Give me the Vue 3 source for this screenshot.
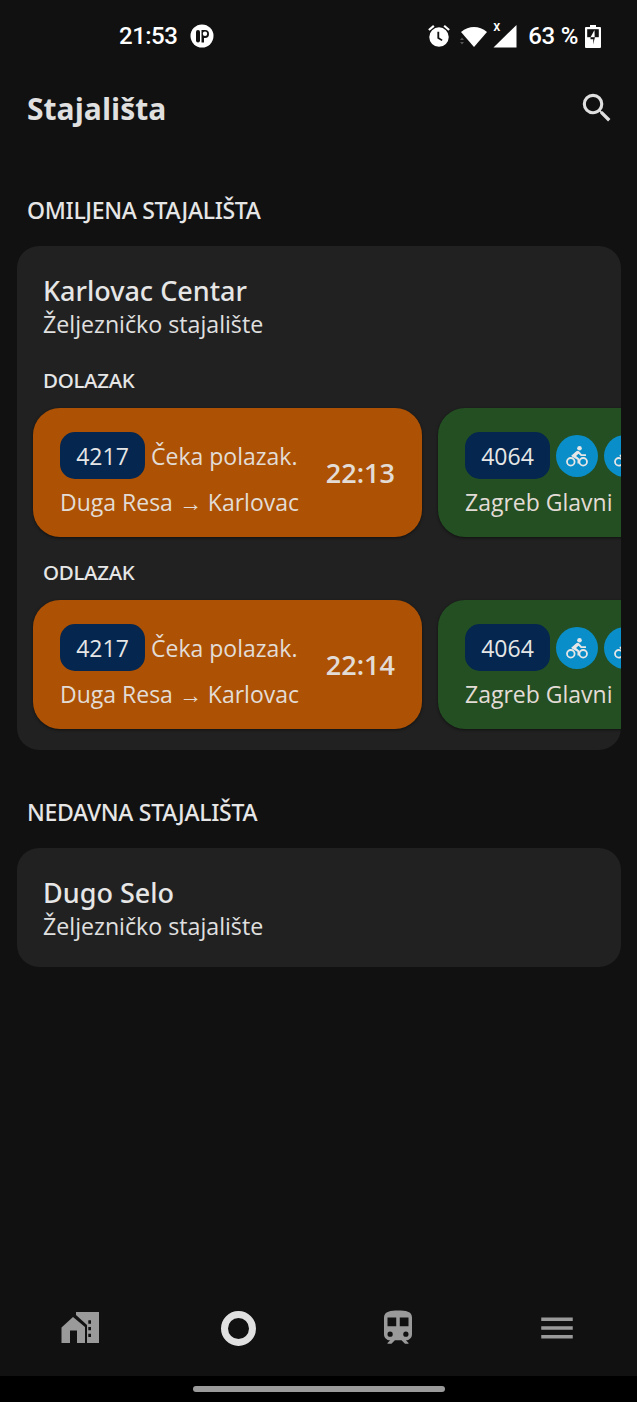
<script setup>
const rows = [
  { label: 'DOLAZAK', time: '22:13' },
  { label: 'ODLAZAK', time: '22:14' }
]
</script>

<template>
  <div class="screen">
    <div class="status">
      <div class="status-left">
        <span class="clock">21:53</span>
        <svg class="notif" width="24" height="24" viewBox="0 0 24 24">
          <circle cx="12" cy="12" r="11.500" fill="#fff" />
          <rect x="6" y="6" width="4" height="12.500" rx="2" fill="#111" />
          <path d="M11.500 6h3.500a4 4 0 0 1 0 8h-1v4.500h-2.500z" fill="#111" />
          <circle cx="15" cy="9.800" r="2.200" fill="#fff" />
        </svg>
      </div>
      <div class="status-right">
        <svg width="26" height="26" viewBox="0 0 24 24" fill="#fff">
          <path d="M22 5.700l-4.600-3.900-1.300 1.500 4.600 3.900L22 5.700zM7.900 3.400L6.600 1.900 2 5.700l1.300 1.500 4.600-3.800zM12 4a9 9 0 1 0 0 18 9 9 0 0 0 0-18z" />
          <path d="M12.200 8h-1.700v6.200l4 2.500.8-1.300-3.100-2z" fill="#111" />
        </svg>
        <svg class="wifi" width="28" height="24" viewBox="0 0 28 24">
          <path d="M1 8C5 4.500 9.500 3 14 3s9 1.500 13 5L14 23z" fill="#fff" />
          <path d="M0 16l2-2.500L4 16zM0 18h4l-2 2.500z" fill="#555" />
        </svg>
        <div class="signal">
          <span class="x">x</span>
          <svg width="24" height="24" viewBox="0 0 24 24"><path d="M23.500 1v22.500H.5z" fill="#fff" /></svg>
        </div>
        <span class="percent">63 %</span>
        <svg width="16" height="23" viewBox="0 0 16 23">
          <path d="M5 0h6v2h4a1 1 0 0 1 1 1v19a1 1 0 0 1-1 1H1a1 1 0 0 1-1-1V3a1 1 0 0 1 1-1h4z" fill="#fff" />
          <path d="M2.200 4.200h11.600v8H2.200z" fill="#111" />
          <path d="M9.500 5L5.500 12.200h4.200z" fill="#fff" />
          <path d="M5.500 12.200h4.500L8 19.500l.3-5.300H5.500z" fill="#111" />
        </svg>
      </div>
    </div>

    <header class="topbar">
      <h1>Stajališta</h1>
      <svg width="38" height="38" viewBox="0 0 24 24" fill="#e0e0e0">
        <path d="M15.500 14h-.79l-.28-.27A6.470 6.470 0 0 0 16 9.500 6.500 6.500 0 1 0 9.500 16c1.610 0 3.090-.59 4.230-1.570l.27.28v.79l5 4.990L20.490 19l-4.990-5zm-6 0C7.010 14 5 11.990 5 9.500S7.010 5 9.500 5 14 7.010 14 9.500 11.990 14 9.500 14z" />
      </svg>
    </header>

    <main class="content">
      <h2 class="section">OMILJENA STAJALIŠTA</h2>
      <section class="card">
        <div class="stop-name">Karlovac Centar</div>
        <div class="stop-type">Željezničko stajalište</div>
        <div class="rows">
          <template v-for="row in rows" :key="row.label">
            <div class="row-label">{{ row.label }}</div>
            <div class="trains">
              <div class="train orange">
                <div class="train-main">
                  <div class="train-top">
                    <span class="chip">4217</span>
                    <span>Čeka polazak.</span>
                  </div>
                  <div class="route">Duga Resa <span class="arrow">→</span> Karlovac</div>
                </div>
                <div class="time">{{ row.time }}</div>
              </div>
              <div class="train green">
                <div class="train-main">
                  <div class="train-top">
                    <span class="chip">4064</span>
                    <span v-for="n in 2" :key="n" class="bike">
                      <svg width="28" height="28" viewBox="0 0 28 28" fill="none">
                        <circle cx="16.500" cy="6.200" r="2.300" fill="#e6e6e6" />
                        <path d="M8.500 13.500l4.800-4.300c.9-.7 1.900-.7 2.700 0l2.700 3h4.300v1.900h-5.200l-2.300-2.300-2.400 2.300 3.400 2.600v4.800h-2v-3.800l-5.300-2.900c-.9-.6-1-1.600-.7-2.300z" fill="#e6e6e6" />
                        <circle cx="7.800" cy="19.800" r="3.800" stroke="#e6e6e6" stroke-width="1.800" />
                        <circle cx="20.200" cy="19.800" r="3.800" stroke="#e6e6e6" stroke-width="1.800" />
                      </svg>
                    </span>
                  </div>
                  <div class="route">Zagreb Glavni</div>
                </div>
              </div>
            </div>
          </template>
        </div>
      </section>

      <h2 class="section">NEDAVNA STAJALIŠTA</h2>
      <section class="card small">
        <div class="stop-name">Dugo Selo</div>
        <div class="stop-type">Željezničko stajalište</div>
      </section>
    </main>

    <nav class="bottom">
      <svg width="40" height="34" viewBox="0 0 40 34" fill="#9a9a9a">
        <path d="M1.500 16.500L13 6l12 10v16h-8V19.500h-7V32H1.500z" />
        <path d="M16 1h23v31H27V14L16 4z" />
        <path d="M28.300 9.300H31v3.400h-2.700zM28.300 16H31v3.300h-2.700zM28.300 22.700H31V26h-2.700z" fill="#111" />
      </svg>
      <div class="ring"></div>
      <svg width="42" height="42" viewBox="0 0 24 24" fill="#9a9a9a">
        <path d="M12 2C8 2 4 2.500 4 6v9.500C4 17.430 5.570 19 7.500 19L6 20.500v.5h2.230l2-2H14l2 2h2v-.5L16.500 19c1.930 0 3.500-1.570 3.500-3.500V6c0-3.500-3.580-4-8-4zM7.500 17a1.500 1.500 0 1 1 0-3 1.500 1.500 0 0 1 0 3zm3.500-6H6V6h5v5zm5.500 6a1.500 1.500 0 1 1 0-3 1.500 1.500 0 0 1 0 3zm1.500-6h-5V6h5v5z" />
      </svg>
      <svg width="42" height="42" viewBox="0 0 24 24" fill="#9a9a9a">
        <path d="M3 18h18v-2H3v2zm0-5h18v-2H3v2zm0-7v2h18V6H3z" />
      </svg>
    </nav>
    <div class="gesture"><span></span></div>
  </div>
</template>

<style>
html, body { margin: 0; background: #111; }
</style>

<style scoped>
.screen {
  width: 637px;
  height: 1402px;
  display: flex;
  flex-direction: column;
  background: #111111;
  color: #e0e0e0;
  font-family: "Open Sans", "Noto Sans", sans-serif;
  overflow: hidden;
}

.status {
  height: 72px;
  flex: none;
  display: flex;
  justify-content: space-between;
  align-items: center;
  padding: 0 36px 0 119px;
  color: #fff;
  font-family: Roboto, sans-serif;
  font-weight: 500;
  font-size: 24px;
}

.status-left, .status-right {
  display: flex;
  align-items: center;
}

.status-left { gap: 13px; }
.status-right { gap: 8px; }
.clock { letter-spacing: -0.5px; }
.percent { margin-right: -1px; letter-spacing: -0.3px; }

.signal {
  position: relative;
  width: 24px;
  height: 24px;
  margin: 0 3px 0 -3px;
}

.x {
  position: absolute;
  top: -6px;
  left: 0;
  font-size: 14px;
  line-height: 16px;
}

.topbar {
  flex: none;
  height: 76px;
  display: flex;
  justify-content: space-between;
  align-items: center;
  padding: 0 21px 4px 27px;
  box-sizing: border-box;
}

.topbar h1 {
  margin: 0;
  font-size: 30px;
  font-weight: 700;
  color: #e0e0e0;
}

.content {
  flex: 1;
  padding: 0 16px 0 17px;
}

.section {
  margin: 46px 0 0 10px;
  height: 34px;
  font-family: "Noto Sans", sans-serif;
  font-size: 23px;
  line-height: 32px;
  font-weight: 500;
  letter-spacing: -0.3px;
  color: #e6e6e6;
}

.card {
  margin-top: 18px;
  height: 504px;
  box-sizing: border-box;
  padding: 27px 0 0 16px;
  background: #212121;
  border-radius: 22px;
  overflow: hidden;
}

.card.small {
  height: 119px;
}

.stop-name, .stop-type { margin-left: 10px; }

.stop-name {
  font-family: "Noto Sans", sans-serif;
  font-size: 27px;
  line-height: 36px;
  font-weight: 500;
  color: #e6e6e6;
}

.stop-type {
  font-size: 23.200px;
  line-height: 30px;
  color: #e0e0e0;
}

.rows { padding-top: 6px; }

.row-label {
  margin: 21px 0 0 10px;
  height: 28px;
  font-family: "Noto Sans", sans-serif;
  font-size: 20.500px;
  line-height: 28px;
  letter-spacing: -0.3px;
  font-weight: 500;
  color: #e6e6e6;
}

.trains {
  display: flex;
  gap: 16px;
  margin-top: 14px;
}

.train {
  flex: none;
  width: 389px;
  height: 129px;
  box-sizing: border-box;
  padding: 24px 27px 0;
  border-radius: 27px;
  display: flex;
  align-items: flex-start;
  justify-content: space-between;
  box-shadow: 0 1px 3px rgba(0, 0, 0, 0.5);
  font-size: 23px;
  color: #e3dcd6;
}

.orange { background: #ad5204; }
.green { background: #234f23; }

.train-top {
  display: flex;
  align-items: center;
  gap: 7px;
  height: 47px;
}

.train-top .bike { margin-right: -1px; }

.chip {
  width: 85px;
  height: 47px;
  box-sizing: border-box;
  display: flex;
  align-items: center;
  justify-content: center;
  background: #04264f;
  border-radius: 15px;
  color: #e6e6e6;
  margin-right: -1px;
}

.bike {
  flex: none;
  width: 42px;
  height: 42px;
  border-radius: 50%;
  background: #0a8ec9;
  display: flex;
  align-items: center;
  justify-content: center;
}

.route {
  margin-top: 7px;
  line-height: 32px;
  white-space: nowrap;
}

.arrow { font-size: 23px; font-family: "Noto Sans", sans-serif; }

.time {
  align-self: center;
  margin-top: -24px;
  font-size: 27px;
  font-weight: 600;
}

.bottom {
  flex: none;
  height: 96px;
  display: flex;
  justify-content: space-between;
  align-items: center;
  padding: 0 59px 0 60px;
  box-sizing: border-box;
}

.ring {
  width: 35px;
  height: 35px;
  box-sizing: border-box;
  border: 7px solid #e0e0e0;
  border-radius: 50%;
  margin: 0 4px;
}

.gesture {
  flex: none;
  height: 26px;
  background: #000;
  display: flex;
  align-items: center;
  justify-content: center;
}

.gesture span {
  width: 252px;
  height: 6px;
  border-radius: 3px;
  background: #9a9a9a;
}
</style>
